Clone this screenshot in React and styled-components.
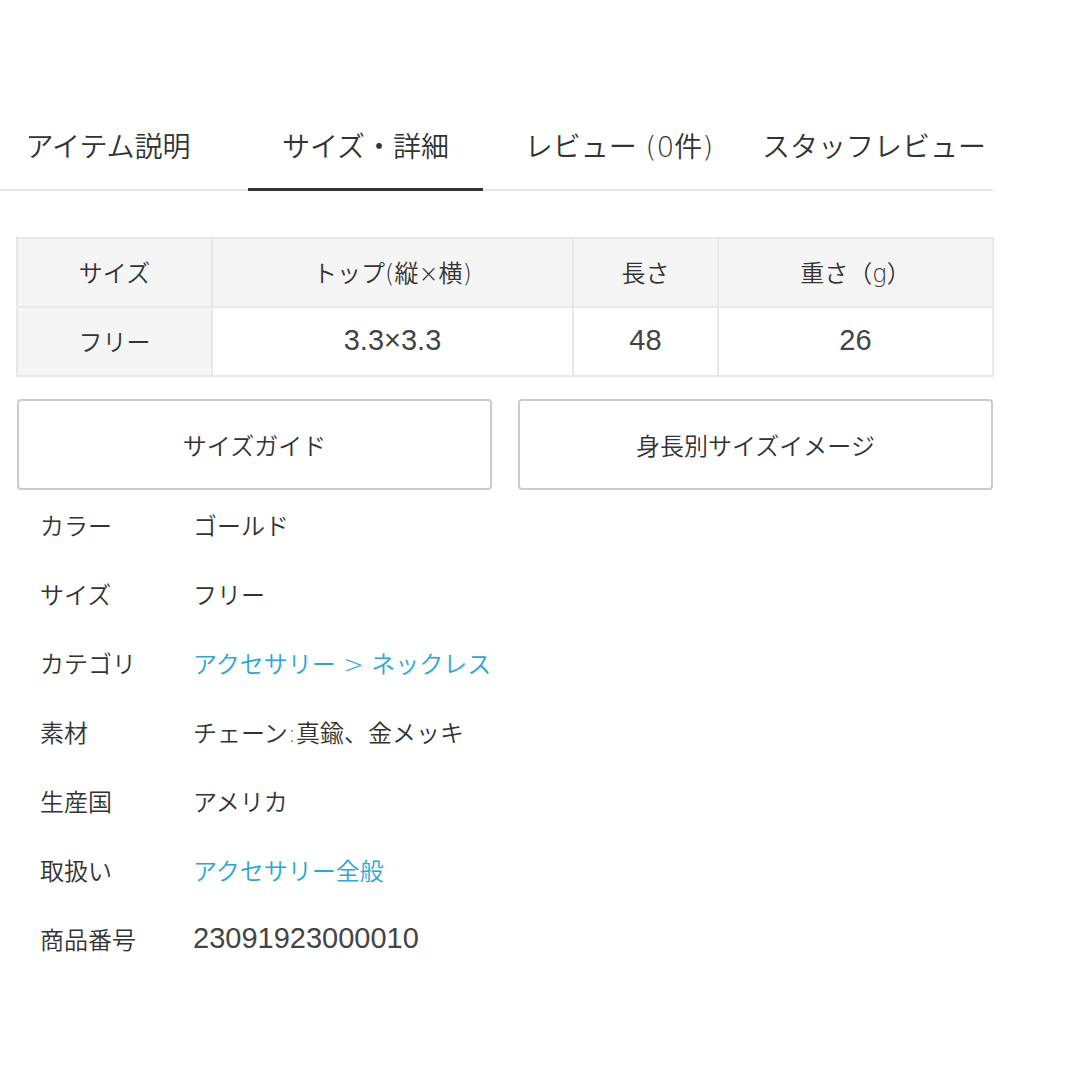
import React from 'react'
import styled, { createGlobalStyle } from 'styled-components'

const GlobalStyle = createGlobalStyle`
  body {
    margin: 0;
    background: #fff;
    color: #333;
    font-family: "DejaVu Sans", "Noto Sans CJK JP", sans-serif;
    font-weight: 350;
  }
`

const Page = styled.div`
  width: 993px;
  padding-top: 109px;
`

const TabBar = styled.div`
  display: flex;
  border-bottom: 2px solid #e8e8e8;
`

const Tab = styled.div`
  position: relative;
  box-sizing: border-box;
  width: ${p => p.$w}px;
  height: 80px;
  padding: 0 ${p => p.$pr || 0}px 8px 0;
  display: flex;
  align-items: center;
  justify-content: center;
  font-size: 28px;
  color: #333;
  white-space: nowrap;
  &::after {
    content: "";
    display: ${p => (p.$active ? 'block' : 'none')};
    position: absolute;
    left: 0;
    right: 0;
    bottom: -2px;
    height: 3px;
    background: #333;
  }
`

/* Latin digits in the reference are a wide Helvetica-like face */
const Num = styled.span`
  font-family: "Liberation Sans", Arial, sans-serif;
  font-size: 29px;
  font-weight: 400;
  color: #444;
`

const SizeTable = styled.table`
  margin: 46px 0 0 16px;
  width: 976px;
  border-collapse: collapse;
  table-layout: fixed;
`

const Cell = styled.td`
  border: 2px solid #e8e8e8;
  height: 64px;
  padding: 0 0 3px;
  text-align: center;
  font-size: 24px;
  color: #333;
  background: ${p => (p.$head ? '#f5f5f5' : '#fff')};
`

const ButtonRow = styled.div`
  margin: 22px 0 0 17px;
  display: grid;
  grid-template-columns: 1fr 1fr;
  gap: 26px;
`

const GuideButton = styled.div`
  height: 91px;
  box-sizing: border-box;
  border: 2px solid #cbcbcb;
  border-radius: 4px;
  display: flex;
  align-items: center;
  justify-content: center;
  font-size: 24px;
  color: #333;
`

const DetailList = styled.dl`
  margin: 0;
  padding: 0 0 0 40px;
`

const DetailRow = styled.div`
  display: flex;
  align-items: center;
  height: 69px;
  font-size: 24px;
`

const Label = styled.dt`
  width: 153px;
  color: #333;
`

const Value = styled.dd`
  margin: 0;
  white-space: pre;
  color: ${p => (p.$link ? '#2aa6d7' : '#333')};
`

const tabs = [
  { label: 'アイテム説明', w: 248, pr: 32 },
  { label: 'サイズ・詳細', w: 235, active: true },
  { label: 'レビュー (0件)', w: 272 },
  { label: 'スタッフレビュー', w: 238 },
]

const details = [
  { k: 'カラー', v: 'ゴールド' },
  { k: 'サイズ', v: 'フリー' },
  { k: 'カテゴリ', v: 'アクセサリー > ネックレス', link: true },
  { k: '素材', v: 'チェーン:真鍮、金メッキ' },
  { k: '生産国', v: 'アメリカ' },
  { k: '取扱い', v: 'アクセサリー全般', link: true },
  { k: '商品番号', v: '23091923000010', num: true },
]

export default function App() {
  return (
    <Page>
      <GlobalStyle />
      <TabBar>
        {tabs.map(t => (
          <Tab key={t.label} $w={t.w} $pr={t.pr} $active={t.active}>
            {t.label}
          </Tab>
        ))}
      </TabBar>

      <SizeTable>
        <colgroup>
          <col style={{ width: 195 }} />
          <col style={{ width: 361 }} />
          <col style={{ width: 145 }} />
          <col style={{ width: 275 }} />
        </colgroup>
        <tbody>
          <tr>
            <Cell $head>サイズ</Cell>
            <Cell $head>トップ(縦×横)</Cell>
            <Cell $head>長さ</Cell>
            <Cell $head>重さ（g）</Cell>
          </tr>
          <tr>
            <Cell $head>フリー</Cell>
            <Cell><Num>3.3×3.3</Num></Cell>
            <Cell><Num>48</Num></Cell>
            <Cell><Num>26</Num></Cell>
          </tr>
        </tbody>
      </SizeTable>

      <ButtonRow>
        <GuideButton>サイズガイド</GuideButton>
        <GuideButton>身長別サイズイメージ</GuideButton>
      </ButtonRow>

      <DetailList>
        {details.map(d => (
          <DetailRow key={d.k}>
            <Label>{d.k}</Label>
            <Value $link={d.link}>{d.num ? <Num>{d.v}</Num> : d.v}</Value>
          </DetailRow>
        ))}
      </DetailList>
    </Page>
  )
}
